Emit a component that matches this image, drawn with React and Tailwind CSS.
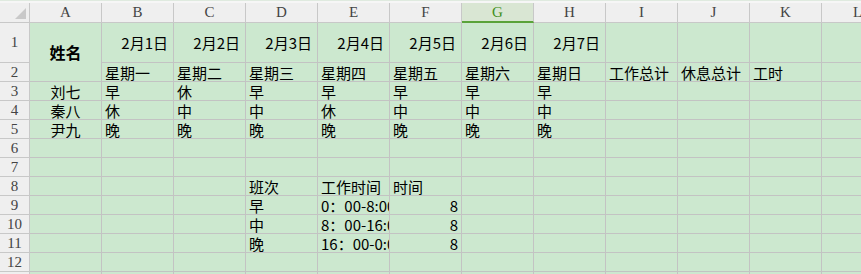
import React from 'react';

const COLS = ['A', 'B', 'C', 'D', 'E', 'F', 'G', 'H', 'I', 'J', 'K', 'L'];

const cjk = { fontFamily: '"Noto Sans CJK SC", "Noto Sans", sans-serif' };

// sheet content, keyed by row number then column letter
const cells = {
  1: { B: '2月1日', C: '2月2日', D: '2月3日', E: '2月4日', F: '2月5日', G: '2月6日', H: '2月7日' },
  2: { B: '星期一', C: '星期二', D: '星期三', E: '星期四', F: '星期五', G: '星期六', H: '星期日', I: '工作总计', J: '休息总计', K: '工时' },
  3: { A: '刘七', B: '早', C: '休', D: '早', E: '早', F: '早', G: '早', H: '早' },
  4: { A: '秦八', B: '休', C: '中', D: '中', E: '休', F: '中', G: '中', H: '中' },
  5: { A: '尹九', B: '晚', C: '晚', D: '晚', E: '晚', F: '晚', G: '晚', H: '晚' },
  8: { D: '班次', E: '工作时间', F: '时间' },
  9: { D: '早', E: '0：00-8:00', F: '8' },
  10: { D: '中', E: '8：00-16:00', F: '8' },
  11: { D: '晚', E: '16：00-0:00', F: '8' },
};

function alignFor(row, col) {
  if (row === 1) return 'justify-end pr-[5px]';
  if (col === 'A') return 'justify-center';
  if (col === 'F' && row >= 9) return 'justify-end pr-[3px]';
  return 'justify-start pl-[3px]';
}

function Cell({ row, col }) {
  const value = cells[row] && cells[row][col];
  return (
    <div
      className={`flex items-center overflow-hidden whitespace-nowrap border-r border-b border-[#c3c3c3] bg-[#cce8cf] text-[15px] leading-none text-black ${alignFor(row, col)}`}
      style={cjk}
    >
      {value}
    </div>
  );
}

function RowHead({ n }) {
  return (
    <div
      className="flex items-center justify-center border-r border-b border-[#c8c8c8] bg-[#efefef] text-[15px] leading-none text-[#444]"
      style={{ fontFamily: '"Liberation Serif", serif' }}
    >
      {n}
    </div>
  );
}

export default function App() {
  const rows = [1, 2, 3, 4, 5, 6, 7, 8, 9, 10, 11, 12, 13];
  return (
    <div className="w-[861px] h-[274px] overflow-hidden bg-white">
      <div className="h-[3px] bg-[#f6f6f6] border-t border-[#dfeadf]" />
      <div className="grid grid-cols-[30px_repeat(12,72px)] grid-rows-[20px_40px_repeat(12,19px)]">
        <div className="relative border-r border-b border-[#c8c8c8] bg-[#efefef]">
          <div className="absolute right-[3px] bottom-[3px] w-0 h-0 border-l-[11px] border-l-transparent border-b-[11px] border-b-[#c9c9c9]" />
        </div>
        {COLS.map((c) =>
          c === 'G' ? (
            <div
              key={c}
              className="flex items-center justify-center border-r border-[#c8c8c8] border-b-2 border-b-[#5aa33a] bg-[#d9e6d3] text-[15px] leading-none text-[#3f8f20]"
              style={{ fontFamily: '"Liberation Serif", serif' }}
            >
              {c}
            </div>
          ) : (
            <div
              key={c}
              className="flex items-center justify-center border-r border-b border-[#c8c8c8] bg-[#efefef] text-[15px] leading-none text-[#444]"
              style={{ fontFamily: '"Liberation Serif", serif' }}
            >
              {c}
            </div>
          )
        )}
        {rows.map((r) => (
          <React.Fragment key={r}>
            <RowHead n={r} />
            {COLS.map((c) => {
              if (c === 'A' && r === 2) return null;
              if (c === 'A' && r === 1) {
                return (
                  <div
                    key={c}
                    className="row-span-2 flex items-center justify-center border-r border-b border-[#c3c3c3] bg-[#cce8cf] text-[16px] font-bold leading-none text-black"
                    style={cjk}
                  >
                    姓名
                  </div>
                );
              }
              return <Cell key={c} row={r} col={c} />;
            })}
          </React.Fragment>
        ))}
      </div>
    </div>
  );
}
